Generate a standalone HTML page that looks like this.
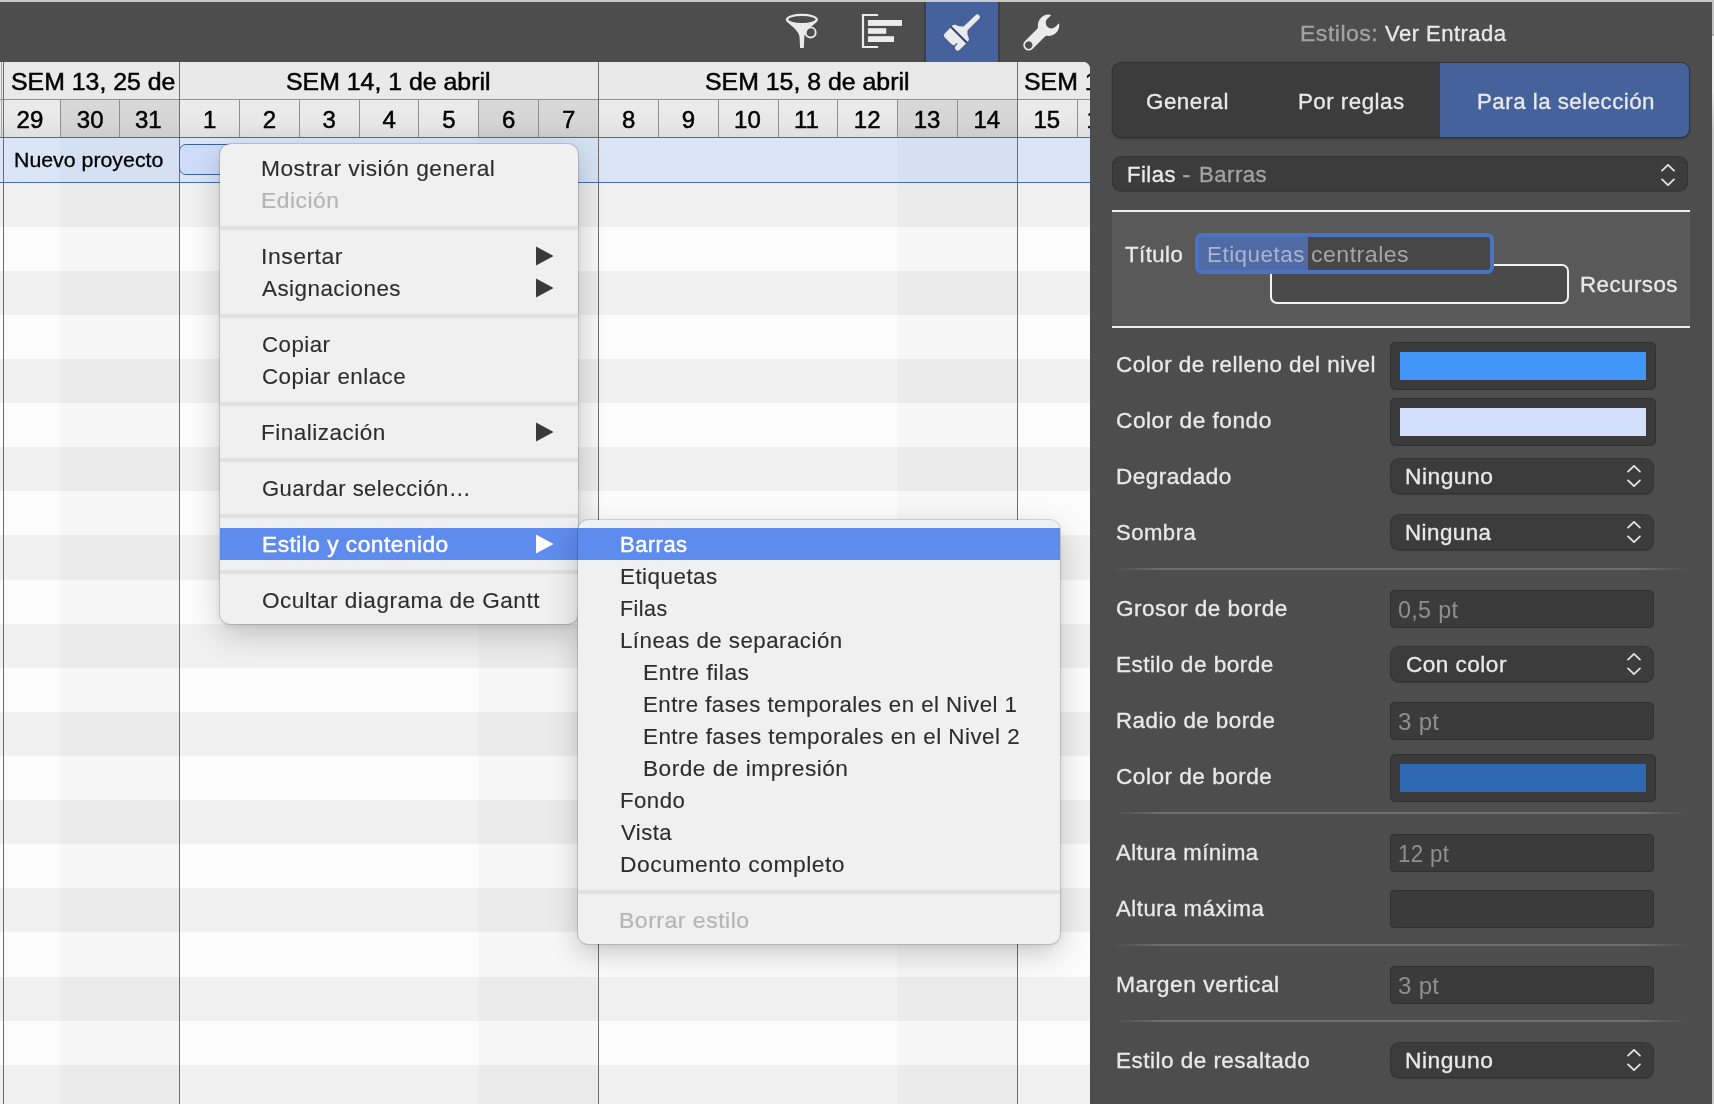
<!DOCTYPE html><html lang="es"><head><meta charset="utf-8"><title>Gantt - Estilos</title><style>
*{box-sizing:border-box;margin:0;padding:0}
html,body{width:1714px;height:1104px;overflow:hidden}
body{background:#4d4d4d;position:relative;font-family:"Liberation Sans",Arial,sans-serif;color:#000;-webkit-font-smoothing:antialiased}
.a{position:absolute}
.t{position:absolute;white-space:nowrap;line-height:1;transform-origin:0 50%;display:block}
.hv{font-size:24px;color:#000;-webkit-text-stroke:.5px #000}
.sf{font-size:21.3px;letter-spacing:.45px;transform:scaleX(1.053)}
.mi{color:#2d2d2d;-webkit-text-stroke:.12px #2d2d2d}
.md{color:#b5b5b7;-webkit-text-stroke:.2px #b5b5b7}
.mw{color:#fff;-webkit-text-stroke:.45px #fff}
.pl{color:#e9e9e9;-webkit-text-stroke:.3px #e9e9e9}
.pg{color:#9b9b9b}
.menu{position:absolute;background:#f0f0f0;border-radius:10.5px;box-shadow:0 0 0 1px rgba(0,0,0,.13),0 10px 30px rgba(0,0,0,.2),0 2px 6px rgba(0,0,0,.07)}
.sep{position:absolute;height:4px;background:#e0e0e0}
.well{position:absolute;background:#3b3b3b;border:1px solid #303030;border-radius:5px}
.fld{position:absolute;background:#3b3b3b;border:1px solid #303030;border-radius:4px}
.pop{position:absolute;background:#3c3c3c;border-radius:8px;box-shadow:0 0 0 1px #333,0 1px 1px 1px rgba(0,0,0,.25)}
.hl{position:absolute;height:2px;left:1112px;width:578px;margin-top:-1px;background:linear-gradient(90deg,rgba(110,110,110,0) 0,#6e6e6e 8%,#6e6e6e 91%,rgba(110,110,110,0) 100%)}
</style></head><body><div id="root" style="position:absolute;left:0;top:0;width:1714px;height:1104px;will-change:transform">
<div class="a" style="left:0px;top:0px;width:1714px;height:2px;background:#c9c9c9"></div>
<div class="a" style="left:924px;top:2px;width:76px;height:60px;background:#3e3e3e"></div>
<div class="a" style="left:926px;top:2px;width:72px;height:60px;background:#46629c"></div>
<svg class="a" style="left:770px;top:2px" width="320" height="60" viewBox="770 2 320 60">
<!-- funnel -->
<g fill="none" stroke="#ebebeb">
<ellipse cx="801.9" cy="19.55" rx="14.9" ry="4.65" stroke-width="2.3"/>
<circle cx="810.65" cy="32.4" r="5.05" stroke-width="1.9"/>
</g>
<path d="M786 20.3 C789 25 798 29 799.5 36.4 L800.1 48 H803.8 L804.3 36.4 C805.5 29 815 25 817.7 20.3 C812 26.4 792 26.4 786 20.3Z" fill="#ebebeb"/>
<!-- gantt -->
<path d="M878.1 15 H863 V47 H878.1" fill="none" stroke="#ebebeb" stroke-width="2.2"/>
<rect x="867.9" y="20" width="34.1" height="5.9" fill="#ebebeb"/>
<rect x="867.9" y="28.2" width="18.3" height="5.6" fill="#ebebeb"/>
<rect x="867.9" y="36.2" width="26.1" height="5.8" fill="#ebebeb"/>
<!-- brush -->
<g transform="translate(958.8 34.7) rotate(45)" fill="#ebebeb">
<rect x="-11" y="-1.2" width="22.2" height="2.4" fill="#34497e"/>
<path d="M-11 -1.1 V-2.3 Q-10.8 -3.8 -9 -4.8 Q-3.6 -6.7 -2.4 -9.7 L-2 -25.6 A2.6 2.6 0 0 1 3.2 -25.6 L3 -9.7 Q4.2 -6.7 9.2 -4.8 Q11 -3.8 11.2 -2.3 V-1.1Z"/>
<path d="M-10.8 1.1 H11.3 V10 A2.75 2.75 0 0 1 5.8 10 V7.4 H4.3 V9.5 Q4.3 11.8 2 11.8 H-8.3 Q-10.8 11.8 -10.8 9.3Z"/>
</g>
<!-- wrench -->
<g transform="translate(1048.55 25.25) rotate(45)" fill="#ebebeb">
<path fill-rule="evenodd" d="M-5.35 -9.27 A10.7 10.7 0 0 0 -6.6 8.42 Q-5.45 9.3 -5.45 10.8 V28.07 A5.45 5.45 0 0 0 5.45 28.07 V10.8 Q5.45 9.3 6.6 8.42 A10.7 10.7 0 0 0 5.95 -8.89 V-3.7 A5.65 5.65 0 0 1 -5.35 -3.7Z M0 24.27 A3.8 3.8 0 1 0 0.01 24.27Z"/>
</g>
</svg>
<div class="a" style="left:0;top:62px;width:1090px;height:1042px;overflow:hidden;border-top-right-radius:7px;background:#fcfcfc">
<div class="a" style="left:0px;top:121px;width:1090px;height:44px;background:#f0f0f0"></div>
<div class="a" style="left:0px;top:165px;width:1090px;height:44px;background:#fcfcfc"></div>
<div class="a" style="left:0px;top:209px;width:1090px;height:44px;background:#f0f0f0"></div>
<div class="a" style="left:0px;top:253px;width:1090px;height:44px;background:#fcfcfc"></div>
<div class="a" style="left:0px;top:297px;width:1090px;height:44px;background:#f0f0f0"></div>
<div class="a" style="left:0px;top:341px;width:1090px;height:44px;background:#fcfcfc"></div>
<div class="a" style="left:0px;top:385px;width:1090px;height:44px;background:#f0f0f0"></div>
<div class="a" style="left:0px;top:429px;width:1090px;height:44px;background:#fcfcfc"></div>
<div class="a" style="left:0px;top:473px;width:1090px;height:45px;background:#f0f0f0"></div>
<div class="a" style="left:0px;top:518px;width:1090px;height:44px;background:#fcfcfc"></div>
<div class="a" style="left:0px;top:562px;width:1090px;height:44px;background:#f0f0f0"></div>
<div class="a" style="left:0px;top:606px;width:1090px;height:44px;background:#fcfcfc"></div>
<div class="a" style="left:0px;top:650px;width:1090px;height:44px;background:#f0f0f0"></div>
<div class="a" style="left:0px;top:694px;width:1090px;height:44px;background:#fcfcfc"></div>
<div class="a" style="left:0px;top:738px;width:1090px;height:44px;background:#f0f0f0"></div>
<div class="a" style="left:0px;top:782px;width:1090px;height:44px;background:#fcfcfc"></div>
<div class="a" style="left:0px;top:826px;width:1090px;height:44px;background:#f0f0f0"></div>
<div class="a" style="left:0px;top:870px;width:1090px;height:45px;background:#fcfcfc"></div>
<div class="a" style="left:0px;top:915px;width:1090px;height:44px;background:#f0f0f0"></div>
<div class="a" style="left:0px;top:959px;width:1090px;height:44px;background:#fcfcfc"></div>
<div class="a" style="left:0px;top:1003px;width:1090px;height:44px;background:#f0f0f0"></div>
<div class="a" style="left:0px;top:1047px;width:1090px;height:44px;background:#fcfcfc"></div>
<div class="a" style="left:0px;top:0px;width:1090px;height:38px;background:#e9e9e9"></div>
<div class="a" style="left:0px;top:38px;width:1090px;height:38px;background:linear-gradient(180deg,#ececec 0,#e8e8e8 55%,#dfdfdf 100%)"></div>
<div class="a" style="left:0px;top:76px;width:1090px;height:45px;background:#dae6f8"></div>
<div class="a" style="left:60px;top:38px;width:119px;height:38px;background:linear-gradient(180deg,#d9d9d9 0,#d5d5d5 55%,#cdcdcd 100%)"></div>
<div class="a" style="left:60px;top:76px;width:119px;height:966px;background:rgba(0,0,0,.018)"></div>
<div class="a" style="left:478px;top:38px;width:120px;height:38px;background:linear-gradient(180deg,#d9d9d9 0,#d5d5d5 55%,#cdcdcd 100%)"></div>
<div class="a" style="left:478px;top:76px;width:120px;height:966px;background:rgba(0,0,0,.018)"></div>
<div class="a" style="left:897px;top:38px;width:120px;height:38px;background:linear-gradient(180deg,#d9d9d9 0,#d5d5d5 55%,#cdcdcd 100%)"></div>
<div class="a" style="left:897px;top:76px;width:120px;height:966px;background:rgba(0,0,0,.018)"></div>
<div class="a" style="left:0px;top:37px;width:1090px;height:1px;background:#8f8f8f"></div>
<div class="a" style="left:60px;top:38px;width:1px;height:37px;background:#8f8f8f"></div>
<div class="a" style="left:119px;top:38px;width:1px;height:37px;background:#8f8f8f"></div>
<div class="a" style="left:239px;top:38px;width:1px;height:37px;background:#8f8f8f"></div>
<div class="a" style="left:299px;top:38px;width:1px;height:37px;background:#8f8f8f"></div>
<div class="a" style="left:359px;top:38px;width:1px;height:37px;background:#8f8f8f"></div>
<div class="a" style="left:418px;top:38px;width:1px;height:37px;background:#8f8f8f"></div>
<div class="a" style="left:478px;top:38px;width:1px;height:37px;background:#8f8f8f"></div>
<div class="a" style="left:538px;top:38px;width:1px;height:37px;background:#8f8f8f"></div>
<div class="a" style="left:658px;top:38px;width:1px;height:37px;background:#8f8f8f"></div>
<div class="a" style="left:718px;top:38px;width:1px;height:37px;background:#8f8f8f"></div>
<div class="a" style="left:778px;top:38px;width:1px;height:37px;background:#8f8f8f"></div>
<div class="a" style="left:837px;top:38px;width:1px;height:37px;background:#8f8f8f"></div>
<div class="a" style="left:897px;top:38px;width:1px;height:37px;background:#8f8f8f"></div>
<div class="a" style="left:957px;top:38px;width:1px;height:37px;background:#8f8f8f"></div>
<div class="a" style="left:1077px;top:38px;width:1px;height:37px;background:#8f8f8f"></div>
<div class="a" style="left:1px;top:0px;width:1px;height:76px;background:#a8a8a8"></div>
<div class="a" style="left:3px;top:0px;width:1px;height:1042px;background:#6a6a6a"></div>
<div class="a" style="left:179px;top:0px;width:1px;height:1042px;background:#6e6e6e"></div>
<div class="a" style="left:598px;top:0px;width:1px;height:1042px;background:#6e6e6e"></div>
<div class="a" style="left:1017px;top:0px;width:1px;height:1042px;background:#6e6e6e"></div>
<div class="a" style="left:0px;top:75px;width:1090px;height:1px;background:#446db8"></div>
<div class="a" style="left:0px;top:120px;width:1090px;height:1px;background:#446db8"></div>
<div class="a" style="left:179px;top:82px;width:200px;height:31px;background:#cfddfb;border:1px solid #3d62a8;border-radius:7px"></div>
</div>
<div class="a" style="left:0;top:62px;width:1090px;height:130px;overflow:hidden">
<span class="t hv" style="left:11px;top:8px;font-size:24.4px;transform:scaleX(1.019)">SEM 13, 25 de</span>
<span class="t hv" style="left:286px;top:8px;font-size:24.4px;transform:scaleX(1.019)">SEM 14, 1 de abril</span>
<span class="t hv" style="left:705px;top:8px;font-size:24.4px;transform:scaleX(1.019)">SEM 15, 8 de abril</span>
<span class="t hv" style="left:1024px;top:8px;font-size:24.4px;transform:scaleX(1.019)">SEM 16, 15 de abril</span>
<span class="t hv" style="left:16.6px;top:46px;">29</span>
<span class="t hv" style="left:76.8px;top:46px;">30</span>
<span class="t hv" style="left:134.9px;top:46px;">31</span>
<span class="t hv" style="left:202.9px;top:46px;">1</span>
<span class="t hv" style="left:262.7px;top:46px;">2</span>
<span class="t hv" style="left:322.6px;top:46px;">3</span>
<span class="t hv" style="left:382.4px;top:46px;">4</span>
<span class="t hv" style="left:442.3px;top:46px;">5</span>
<span class="t hv" style="left:502.1px;top:46px;">6</span>
<span class="t hv" style="left:562.0px;top:46px;">7</span>
<span class="t hv" style="left:621.9px;top:46px;">8</span>
<span class="t hv" style="left:681.7px;top:46px;">9</span>
<span class="t hv" style="left:734.1px;top:46px;">10</span>
<span class="t hv" style="left:794.0px;top:46px;">11</span>
<span class="t hv" style="left:853.8000000000001px;top:46px;">12</span>
<span class="t hv" style="left:913.7px;top:46px;">13</span>
<span class="t hv" style="left:973.5px;top:46px;">14</span>
<span class="t hv" style="left:1033.4px;top:46px;">15</span>
<span class="t hv" style="left:1086.5px;top:46px;">16</span>
<span class="t hv" style="left:14.4px;top:88px;font-size:20px;-webkit-text-stroke:.3px #000;transform:scaleX(1.066)">Nuevo proyecto</span>
</div>
<div class="menu" style="left:220px;top:144px;width:358px;height:480px"></div>
<div class="a" style="left:220px;top:528px;width:358px;height:32px;background:#5e8cee"></div>
<div class="sep" style="left:220px;top:226px;width:358px"></div>
<div class="sep" style="left:220px;top:314px;width:358px"></div>
<div class="sep" style="left:220px;top:402px;width:358px"></div>
<div class="sep" style="left:220px;top:458px;width:358px"></div>
<div class="sep" style="left:220px;top:514px;width:358px"></div>
<div class="sep" style="left:220px;top:570px;width:358px"></div>
<span class="t sf mi" style="left:261px;top:159px;;transform:scaleX(1.0683)">Mostrar visión general</span>
<span class="t sf md" style="left:261px;top:191px;;transform:scaleX(1.0754)">Edición</span>
<span class="t sf mi" style="left:261px;top:247px;;transform:scaleX(1.0805)">Insertar</span>
<svg class="a" style="left:535px;top:245px" width="20" height="22" viewBox="0 0 20 22"><path d="M1 1.6 L18.6 11 L1 20.4Z" fill="#3a3a3a"/></svg>
<span class="t sf mi" style="left:262px;top:279px;;transform:scaleX(1.0524)">Asignaciones</span>
<svg class="a" style="left:535px;top:277px" width="20" height="22" viewBox="0 0 20 22"><path d="M1 1.6 L18.6 11 L1 20.4Z" fill="#3a3a3a"/></svg>
<span class="t sf mi" style="left:262px;top:335px;;transform:scaleX(1.0450)">Copiar</span>
<span class="t sf mi" style="left:262px;top:367px;;transform:scaleX(1.0498)">Copiar enlace</span>
<span class="t sf mi" style="left:261px;top:423px;;transform:scaleX(1.0577)">Finalización</span>
<svg class="a" style="left:535px;top:421px" width="20" height="22" viewBox="0 0 20 22"><path d="M1 1.6 L18.6 11 L1 20.4Z" fill="#3a3a3a"/></svg>
<span class="t sf mi" style="left:262px;top:479px;;transform:scaleX(1.0341)">Guardar selección…</span>
<span class="t sf mw" style="left:262px;top:535px;;transform:scaleX(1.0666)">Estilo y contenido</span>
<svg class="a" style="left:535px;top:533px" width="20" height="22" viewBox="0 0 20 22"><path d="M1 1.6 L18.6 11 L1 20.4Z" fill="#fff"/></svg>
<span class="t sf mi" style="left:262px;top:591px;;transform:scaleX(1.0598)">Ocultar diagrama de Gantt</span>
<div class="menu" style="left:578px;top:520px;width:482px;height:424px"></div>
<div class="a" style="left:578px;top:528px;width:482px;height:32px;background:#5e8cee"></div>
<div class="sep" style="left:578px;top:890px;width:482px"></div>
<span class="t sf mw" style="left:620px;top:535px;;transform:scaleX(1.0322)">Barras</span>
<span class="t sf mi" style="left:620px;top:567px;;transform:scaleX(1.0524)">Etiquetas</span>
<span class="t sf mi" style="left:620px;top:599px;;transform:scaleX(1.0093)">Filas</span>
<span class="t sf mi" style="left:620px;top:631px;;transform:scaleX(1.0469)">Líneas de separación</span>
<span class="t sf mi" style="left:643px;top:663px;;transform:scaleX(1.0676)">Entre filas</span>
<span class="t sf mi" style="left:643px;top:695px;;transform:scaleX(1.0450)">Entre fases temporales en el Nivel 1</span>
<span class="t sf mi" style="left:643px;top:727px;;transform:scaleX(1.0526)">Entre fases temporales en el Nivel 2</span>
<span class="t sf mi" style="left:643px;top:759px;;transform:scaleX(1.0659)">Borde de impresión</span>
<span class="t sf mi" style="left:620px;top:791px;;transform:scaleX(1.0427)">Fondo</span>
<span class="t sf mi" style="left:621px;top:823px;;transform:scaleX(1.0391)">Vista</span>
<span class="t sf mi" style="left:620px;top:855px;;transform:scaleX(1.0750)">Documento completo</span>
<span class="t sf md" style="left:619px;top:911px;;transform:scaleX(1.0824)">Borrar estilo</span>
<div class="a" style="left:1712px;top:0px;width:2px;height:1104px;background:linear-gradient(180deg,#c4c4c4 0,#c4c4c4 34px,#8a8a8a 35px,#ececec 36px,#ececec 90px,#c8c8c8 130px,#c8c8c8 100%)"></div>
<span class="t sf" style="left:1300px;top:24px;color:#a3a3a3;-webkit-text-stroke:.3px #a3a3a3;transform:scaleX(1.0829)">Estilos:</span>
<span class="t sf pl" style="left:1385px;top:24px;;transform:scaleX(1.0350)">Ver Entrada</span>
<div class="a" style="left:1113px;top:63px;width:576px;height:74px;background:#3c3c3c;border-radius:8px;box-shadow:0 0 0 1px #333,0 1px 2px 1px rgba(0,0,0,.3);overflow:hidden"><div class="a" style="left:327px;top:0;width:249px;height:74px;background:#46629c"></div></div>
<span class="t sf pl" style="left:1146px;top:92px;;transform:scaleX(1.0508)">General</span>
<span class="t sf pl" style="left:1298px;top:92px;;transform:scaleX(1.0488)">Por reglas</span>
<span class="t sf pl" style="left:1477px;top:92px;;transform:scaleX(1.0481)">Para la selección</span>
<div class="pop" style="left:1113px;top:157px;width:574px;height:33px;"></div>
<span class="t sf pl" style="left:1127px;top:165px;;transform:scaleX(1.0380)">Filas</span>
<span class="t sf" style="left:1182px;top:165px;color:#a3a3a3;-webkit-text-stroke:.3px #a3a3a3;transform:scaleX(1.2)">-</span>
<span class="t sf" style="left:1199px;top:165px;color:#a3a3a3;-webkit-text-stroke:.3px #a3a3a3;transform:scaleX(1.0419)">Barras</span>
<svg class="a" style="left:1659.5px;top:161.5px" width="16" height="26" viewBox="0 0 16 26"><path d="M2 8.6 L8 2.8 L14 8.6 M2 17.4 L8 23.2 L14 17.4" fill="none" stroke="#e4e4e4" stroke-width="1.8" stroke-linecap="round" stroke-linejoin="round"/></svg>
<div class="a" style="left:1112px;top:212px;width:578px;height:114px;background:#595959"></div>
<div class="a" style="left:1112px;top:210px;width:578px;height:2px;background:#ededed"></div>
<div class="a" style="left:1112px;top:326px;width:578px;height:2px;background:#ededed"></div>
<span class="t sf pl" style="left:1125px;top:245px;;transform:scaleX(1.0412)">Título</span>
<div class="a" style="left:1270px;top:264px;width:299px;height:40px;border:2px solid #f2f2f2;border-radius:7px;background:#4a4a4a"></div>
<div class="a" style="left:1195px;top:233px;width:299px;height:41px;background:#4c73c2;border-radius:7px"></div>
<div class="a" style="left:1199px;top:237px;width:291px;height:33px;background:#474747;border-radius:3px;overflow:hidden"><div class="a" style="left:0;top:0;width:109px;height:33px;background:#4f6aa4"></div></div>
<span class="t sf" style="left:1207px;top:245px;color:#aab4cc;transform:scaleX(1.0536)">Etiquetas</span>
<span class="t sf" style="left:1311px;top:245px;color:#a6a6a6;transform:scaleX(1.0847)">centrales</span>
<span class="t sf pl" style="left:1580px;top:275px;;transform:scaleX(1.0475)">Recursos</span>
<span class="t sf pl" style="left:1116px;top:355px;;transform:scaleX(1.0561)">Color de relleno del nivel</span>
<div class="well" style="left:1390px;top:342px;width:266px;height:48px;"></div>
<div class="a" style="left:1400px;top:352px;width:246px;height:28px;background:#4196f8"></div>
<span class="t sf pl" style="left:1116px;top:411px;;transform:scaleX(1.0673)">Color de fondo</span>
<div class="well" style="left:1390px;top:398px;width:266px;height:48px;"></div>
<div class="a" style="left:1400px;top:408px;width:246px;height:28px;background:#d3e0fb"></div>
<span class="t sf pl" style="left:1116px;top:467px;;transform:scaleX(1.0586)">Degradado</span>
<div class="pop" style="left:1391px;top:459px;width:262px;height:34px;"></div>
<span class="t sf pl" style="left:1405px;top:467px;;transform:scaleX(1.0713)">Ninguno</span>
<svg class="a" style="left:1625.5px;top:463px" width="16" height="26" viewBox="0 0 16 26"><path d="M2 8.6 L8 2.8 L14 8.6 M2 17.4 L8 23.2 L14 17.4" fill="none" stroke="#e4e4e4" stroke-width="1.8" stroke-linecap="round" stroke-linejoin="round"/></svg>
<span class="t sf pl" style="left:1116px;top:523px;;transform:scaleX(1.0384)">Sombra</span>
<div class="pop" style="left:1391px;top:515px;width:262px;height:34px;"></div>
<span class="t sf pl" style="left:1405px;top:523px;;transform:scaleX(1.0485)">Ninguna</span>
<svg class="a" style="left:1625.5px;top:519px" width="16" height="26" viewBox="0 0 16 26"><path d="M2 8.6 L8 2.8 L14 8.6 M2 17.4 L8 23.2 L14 17.4" fill="none" stroke="#e4e4e4" stroke-width="1.8" stroke-linecap="round" stroke-linejoin="round"/></svg>
<div class="hl" style="top:569px"></div>
<span class="t sf pl" style="left:1116px;top:599px;;transform:scaleX(1.0613)">Grosor de borde</span>
<div class="fld" style="left:1390px;top:590px;width:264px;height:38px;"></div>
<span class="t sf" style="left:1398px;top:599px;font-size:23px;letter-spacing:.3px;color:#8f8f8f;transform:scaleX(1.0155)">0,5 pt</span>
<span class="t sf pl" style="left:1116px;top:655px;;transform:scaleX(1.0606)">Estilo de borde</span>
<div class="pop" style="left:1391px;top:647px;width:262px;height:34px;"></div>
<span class="t sf pl" style="left:1406px;top:655px;;transform:scaleX(1.0597)">Con color</span>
<svg class="a" style="left:1625.5px;top:651px" width="16" height="26" viewBox="0 0 16 26"><path d="M2 8.6 L8 2.8 L14 8.6 M2 17.4 L8 23.2 L14 17.4" fill="none" stroke="#e4e4e4" stroke-width="1.8" stroke-linecap="round" stroke-linejoin="round"/></svg>
<span class="t sf pl" style="left:1116px;top:711px;;transform:scaleX(1.0489)">Radio de borde</span>
<div class="fld" style="left:1390px;top:702px;width:264px;height:38px;"></div>
<span class="t sf" style="left:1398px;top:711px;font-size:23px;letter-spacing:.3px;color:#8f8f8f;transform:scaleX(1.0456)">3 pt</span>
<span class="t sf pl" style="left:1116px;top:767px;;transform:scaleX(1.0626)">Color de borde</span>
<div class="well" style="left:1390px;top:754px;width:266px;height:48px;"></div>
<div class="a" style="left:1400px;top:764px;width:246px;height:28px;background:#2f69b1"></div>
<div class="hl" style="top:813px"></div>
<span class="t sf pl" style="left:1116px;top:843px;;transform:scaleX(1.0395)">Altura mínima</span>
<div class="fld" style="left:1390px;top:834px;width:264px;height:38px;"></div>
<span class="t sf" style="left:1398px;top:843px;font-size:23px;letter-spacing:.3px;color:#8f8f8f;transform:scaleX(0.9745)">12 pt</span>
<span class="t sf pl" style="left:1116px;top:899px;;transform:scaleX(1.0448)">Altura máxima</span>
<div class="fld" style="left:1390px;top:890px;width:264px;height:38px;"></div>
<div class="hl" style="top:945px"></div>
<span class="t sf pl" style="left:1116px;top:975px;;transform:scaleX(1.0743)">Margen vertical</span>
<div class="fld" style="left:1390px;top:966px;width:264px;height:38px;"></div>
<span class="t sf" style="left:1398px;top:975px;font-size:23px;letter-spacing:.3px;color:#8f8f8f;transform:scaleX(1.0456)">3 pt</span>
<div class="hl" style="top:1021px"></div>
<span class="t sf pl" style="left:1116px;top:1051px;;transform:scaleX(1.0575)">Estilo de resaltado</span>
<div class="pop" style="left:1391px;top:1043px;width:262px;height:34px;"></div>
<span class="t sf pl" style="left:1405px;top:1051px;;transform:scaleX(1.0713)">Ninguno</span>
<svg class="a" style="left:1625.5px;top:1047px" width="16" height="26" viewBox="0 0 16 26"><path d="M2 8.6 L8 2.8 L14 8.6 M2 17.4 L8 23.2 L14 17.4" fill="none" stroke="#e4e4e4" stroke-width="1.8" stroke-linecap="round" stroke-linejoin="round"/></svg>
</div></body></html>
